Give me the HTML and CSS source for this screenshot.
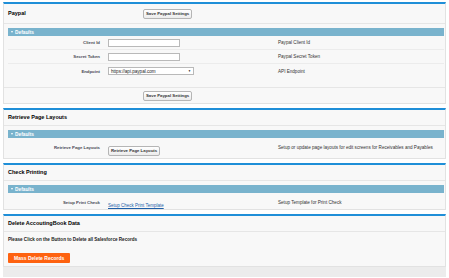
FILE: index.html
```html
<!DOCTYPE html>
<html lang="en">
<head>
	<meta charset="UTF-8">
	<title>Accounting Settings</title>
	<link rel="stylesheet" href="styles.css">
</head>
<body>
<div class="page">

	<div class="block">
		<div class="block-head has-btn">
			<h2>Paypal</h2>
			<button class="btn">Save Paypal Settings</button>
		</div>
		<div class="section">
			<div class="sub-head"><span class="tri"></span>Defaults</div>
			<div class="row">
				<label>Client Id</label>
				<div class="data"><input class="field" type="text"></div>
				<div class="help">Paypal Client Id</div>
			</div>
			<div class="row">
				<label>Secret Token</label>
				<div class="data"><input class="field" type="text"></div>
				<div class="help">Paypal Secret Token</div>
			</div>
			<div class="row last">
				<label>Endpoint</label>
				<div class="data"><div class="select"><span>https://api.paypal.com</span><span class="arrow">&#9660;</span></div></div>
				<div class="help">API Endpoint</div>
			</div>
		</div>
		<div class="block-foot">
			<button class="btn">Save Paypal Settings</button>
		</div>
	</div>

	<div class="block">
		<div class="block-head">
			<h2>Retrieve Page Layouts</h2>
		</div>
		<div class="section">
			<div class="sub-head"><span class="tri"></span>Defaults</div>
			<div class="row last tall">
				<label>Retrieve Page Layouts</label>
				<div class="data"><button class="btn">Retrieve Page Layouts</button></div>
				<div class="help">Setup or update page layouts for edit screens for Receivables and Payables</div>
			</div>
		</div>
	</div>

	<div class="block">
		<div class="block-head">
			<h2>Check Printing</h2>
		</div>
		<div class="section">
			<div class="sub-head"><span class="tri"></span>Defaults</div>
			<div class="row last">
				<label>Setup Print Check</label>
				<div class="data"><a href="#" class="link">Setup Check Print Template</a></div>
				<div class="help">Setup Template for Print Check</div>
			</div>
		</div>
	</div>

	<div class="block">
		<div class="block-head">
			<h2>Delete AccoutingBook Data</h2>
		</div>
		<div class="block-body">
			<p class="note">Please Click on the Button to Delete all Salesforce Records</p>
			<button class="btn-danger">Mass Delete Records</button>
		</div>
	</div>

	<div class="bottom-bar"></div>
</div>
</body>
</html>
```

FILE: styles.css
```css
*{padding:0; margin:0; box-sizing:border-box;}
body{background:#fff; font-family:"Liberation Sans", Arial, sans-serif; color:#333;}
.page{padding:2px 3px 0;}

.block{background:#f8f8f8; border:1px solid #e2e2e2; border-top:2px solid #1f8fd8; margin-bottom:4px;}
.block-head{height:16px; padding:0 4px; display:flex; align-items:center; border-bottom:1px solid #e6e6e6;}
.block-head.has-btn{height:20px;}
.block-head h2{width:135px; font-size:5.5px; line-height:7px; font-weight:bold; color:#000;}

.section{padding:4px 1px 2px 4px;}
.block:first-child .section{padding-bottom:9px;}
.sub-head{height:8px; background:#79b3cd; color:#fff; font-size:4.8px; font-weight:bold; display:flex; align-items:center; padding-left:3px;}
.tri{width:0; height:0; border-left:1.5px solid transparent; border-right:1.5px solid transparent; border-top:2px solid #fff; margin-right:2px;}

.row{display:grid; grid-template-columns:100px 170px 1fr; height:14px; align-items:center; border-bottom:1px solid #ececec;}
.row.last{border-bottom:none;}
.row.tall{height:18px;}
.row label{text-align:right; padding-right:8px; font-size:4.3px; font-weight:bold; color:#4a4a56;}
.help{font-size:4.6px; color:#333;}

.field{width:72px; height:8px; border:1px solid #b9b9b9; background:#fff; display:block;}
.select{width:86px; height:8px; border:1px solid #b9b9b9; background:#fff; display:flex; justify-content:space-between; align-items:center; padding:0 2px; font-size:4.6px; color:#222;}
.select .arrow{font-size:3px; color:#111;}
.link{font-size:4.5px; color:#1d5ea8; text-decoration:underline;}

.btn{height:10px; padding:0 2px; font-family:inherit; font-size:4.3px; font-weight:bold; color:#333; border:1px solid #b5b5b5; border-radius:2px; background:linear-gradient(#fff, #ececec);}
.block-foot{height:16px; border-top:1px solid #e6e6e6; display:flex; align-items:center; padding-left:139px;}

.block-body{padding:4px 4px 2px;}
.note{font-size:4.6px; line-height:7px; font-weight:bold; color:#222; margin-bottom:3px;}
.btn-danger{height:10px; padding:0 6px; font-family:inherit; font-size:5px; font-weight:bold; color:#fff; background:#fe6210; border:none; border-radius:1px;}

.bottom-bar{height:10px; background:#ececec; margin-top:-4px;}
```
